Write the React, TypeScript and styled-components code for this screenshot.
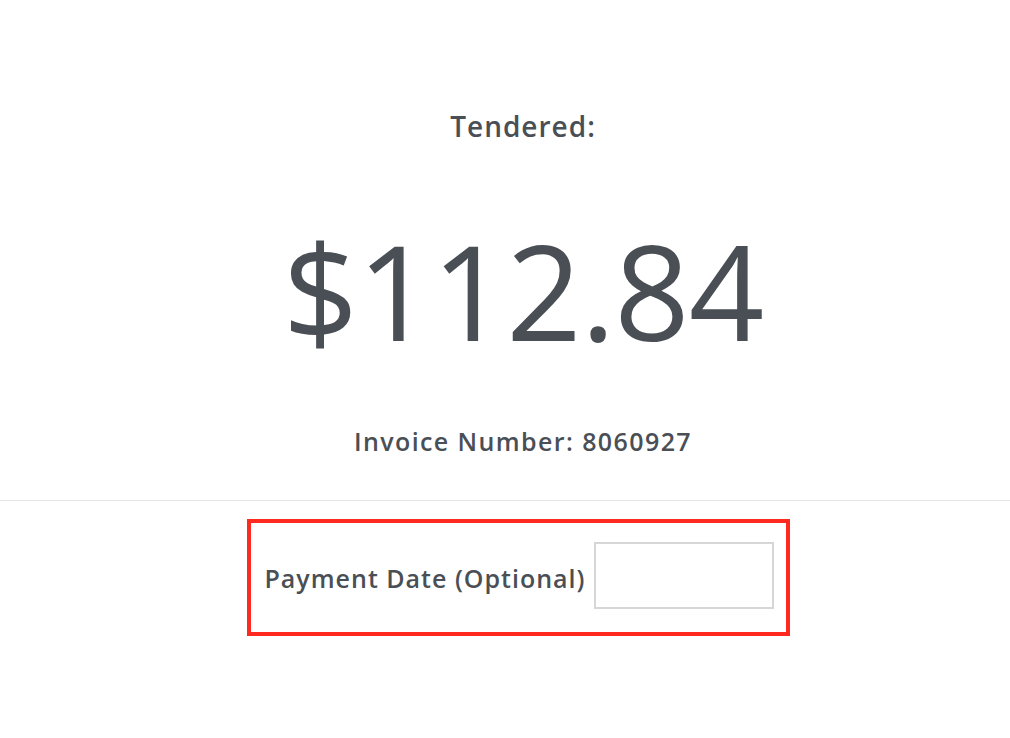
import React from "react";
import styled, { createGlobalStyle } from "styled-components";

const Global = createGlobalStyle`
  html, body { margin: 0; padding: 0; background: #ffffff; }
  body { font-family: "Open Sans", "Liberation Sans", sans-serif; color: #4a4f56; }
`;

const Page = styled.div`
  width: 1010px;
  height: 738px;
  display: flex;
  flex-direction: column;
  box-sizing: border-box;
  padding-top: 104px;
`;

const Summary = styled.section`
  display: flex;
  flex-direction: column;
  align-items: center;
  padding-left: 36px;
`;

const Label = styled.div`
  font-size: 28px;
  font-weight: 600;
  line-height: 44px;
  letter-spacing: 1px;
  color: #4a4f56;
`;

const Amount = styled.div`
  margin-top: 62px;
  font-size: 132px;
  font-weight: 400;
  line-height: 160px;
  letter-spacing: -1px;
  color: #4a4f56;
`;

const Invoice = styled.div`
  margin-top: 54px;
  font-size: 25px;
  font-weight: 600;
  line-height: 34px;
  letter-spacing: 1.4px;
  color: #4a4f56;
`;

const Divider = styled.hr`
  margin: 42px 0 0;
  border: 0;
  border-top: 1px solid #e5e5e5;
  width: 100%;
`;

const FieldBox = styled.div`
  align-self: center;
  margin: 18px 0 0 26px;
  width: 543px;
  height: 117px;
  box-sizing: border-box;
  border: 4px solid #ff2a1f;
  display: flex;
  align-items: center;
  padding-left: 14px;
  gap: 9px;
`;

const FieldLabel = styled.label`
  font-size: 25px;
  font-weight: 600;
  letter-spacing: 1px;
  color: #4a4f56;
  white-space: nowrap;
`;

const DateInput = styled.input`
  width: 180px;
  height: 67px;
  box-sizing: border-box;
  border: 2px solid #d6d6d6;
  background: #fff;
  outline: none;
  margin-top: -4px;
`;

export default function App() {
  return (
    <>
      <Global />
      <Page>
        <Summary>
          <Label>Tendered:</Label>
          <Amount>$112.84</Amount>
          <Invoice>Invoice Number: 8060927</Invoice>
        </Summary>
        <Divider />
        <FieldBox>
          <FieldLabel>Payment Date (Optional)</FieldLabel>
          <DateInput type="text" />
        </FieldBox>
      </Page>
    </>
  );
}
